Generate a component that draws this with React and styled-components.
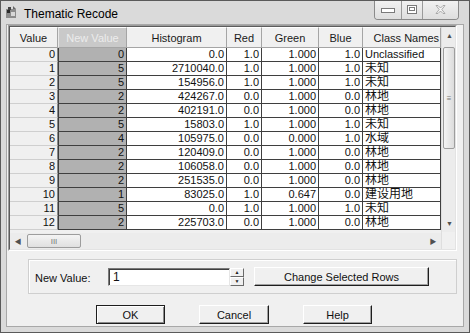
import styled, { createGlobalStyle } from "styled-components";

const GlobalStyle = createGlobalStyle`
  body {
    margin: 0;
    font-family: "Liberation Sans", Arial, "Noto Sans CJK SC", sans-serif;
    font-size: 11px;
    color: #111;
  }
`;

const COLS = "48px 69px 100px 35px 57px 44px 78px";

const Window = styled.div`
  width: 470px;
  height: 333px;
  box-sizing: border-box;
  border: 1px solid #5a5a5a;
  background: #dadada;
  display: flex;
  flex-direction: column;
  overflow: hidden;
`;

const TitleBar = styled.div`
  height: 23px;
  display: flex;
  align-items: flex-start;
  padding-left: 4px;
  position: relative;
`;

const TitleText = styled.span`
  font-size: 12px;
  margin-top: 6px;
  margin-left: 6px;
  color: #000;
`;

const Controls = styled.div`
  position: absolute;
  top: -1px;
  right: 10px;
  display: flex;
  border: 1px solid #8a8a8a;
  border-top: none;
  border-radius: 0 0 4px 4px;
  overflow: hidden;
  height: 19px;
`;

const CtrlButton = styled.div`
  width: ${(p) => p.$w}px;
  height: 19px;
  display: flex;
  align-items: center;
  justify-content: center;
  background: linear-gradient(#f2f2f2, #dedede);
  border-left: ${(p) => (p.$first ? "none" : "1px solid #9a9a9a")};
`;

const Client = styled.div`
  flex: 1;
  margin: 0 5px 5px 5px;
  border: 1px solid #a8a8a8;
  background: #f0f0f0;
  display: flex;
  flex-direction: column;
`;

const GridFrame = styled.div`
  margin-left: 1px;
  width: 449px;
  height: 226px;
  box-sizing: border-box;
  border: 1px solid #9c9c9c;
  border-right-color: #ffffff;
  border-bottom-color: #ffffff;
  display: flex;
`;

const GridInner = styled.div`
  flex: 1;
  border: 1px solid #5c5c5c;
  border-right-color: #e3e3e3;
  border-bottom-color: #e3e3e3;
  display: flex;
  overflow: hidden;
`;

const DataPane = styled.div`
  width: 431px;
  display: flex;
  flex-direction: column;
`;

const Rows = styled.div`
  flex: 1;
  overflow: hidden;
`;

const GridRow = styled.div`
  display: grid;
  grid-template-columns: ${COLS};
  height: ${(p) => p.$h}px;
`;

const HeadCell = styled.div`
  box-sizing: border-box;
  background: ${(p) => (p.$sel ? "#c9c9c9" : "#f0f0f0")};
  color: ${(p) => (p.$sel ? "#ececec" : "#1a1a1a")};
  border-top: 1px solid #ffffff;
  border-right: 1px solid #a5a5a5;
  border-bottom: 1px solid #a5a5a5;
  border-left: ${(p) => (p.$sel ? "1px solid #e8e8e8" : "none")};
  display: flex;
  align-items: center;
  justify-content: ${(p) => (p.$end ? "flex-end" : "center")};
  padding-right: ${(p) => (p.$end ? "1px" : "0")};
  white-space: nowrap;
`;

const Cell = styled.div`
  box-sizing: border-box;
  line-height: 13px;
  padding: 0 2px;
  white-space: nowrap;
  overflow: hidden;
  text-align: ${(p) => (p.$kind === "text" ? "left" : "right")};
  background: ${(p) =>
    p.$kind === "index" ? "#f0f0f0" : p.$kind === "new" ? "#b1b1b1" : "#ffffff"};
  border-bottom: 1px solid
    ${(p) => (p.$kind === "index" ? "#cfcfcf" : "#3f3f3f")};
  border-right: 1px solid ${(p) => (p.$kind === "index" ? "#8a8a8a" : "#3f3f3f")};
  border-left: ${(p) => (p.$kind === "new" ? "1px solid #3f3f3f" : "none")};
  font-size: ${(p) => (p.$cjk ? "12px" : "11px")};
`;

const HScroll = styled.div`
  height: 16px;
  margin-top: 2px;
  background: #ececec;
  display: flex;
  align-items: center;
`;

const VScroll = styled.div`
  width: 15px;
  display: flex;
  flex-direction: column;
  background: #ececec;
  border-left: 1px solid #dedede;
`;

const Arrow = styled.div`
  width: ${(p) => (p.$horiz ? 16 : 15)}px;
  height: ${(p) => (p.$horiz ? 16 : 17)}px;
  flex: none;
  display: flex;
  align-items: center;
  justify-content: center;
  color: #505050;
  font-size: 7px;
`;

const Thumb = styled.div`
  box-sizing: border-box;
  border: 1px solid #9d9d9d;
  border-radius: 2px;
  background: ${(p) =>
    p.$horiz
      ? "linear-gradient(#f4f4f4, #e0e0e0)"
      : "linear-gradient(90deg, #f4f4f4, #dcdcdc)"};
  display: flex;
  align-items: center;
  justify-content: center;
  color: #777;
  font-size: 8px;
  width: ${(p) => (p.$horiz ? "54px" : "12px")};
  height: ${(p) => (p.$horiz ? "14px" : "102px")};
  margin: ${(p) => (p.$horiz ? "0 0 0 1px" : "3px 0 0 1px")};
`;

const Spacer = styled.div`
  flex: 1;
`;

const Corner = styled.div`
  height: 17px;
  background: #f0f0f0;
`;

const GroupBox = styled.div`
  margin: 8px 0 0 21px;
  width: 429px;
  height: 35px;
  box-sizing: border-box;
  border: 1px solid #cfcfcf;
  box-shadow: inset 1px 1px 0 #ffffff;
  display: flex;
  align-items: center;
  padding: 0 0 0 6px;
`;

const Label = styled.span`
  width: 73px;
  margin-top: 2px;
`;

const Input = styled.div`
  width: 122px;
  height: 18px;
  box-sizing: border-box;
  background: #fff;
  border-top: 1px solid #7a7a7a;
  border-left: 1px solid #7a7a7a;
  border-bottom: 1px solid #e6e6e6;
  border-right: 1px solid #e6e6e6;
  box-shadow: inset 1px 1px 0 #404040;
  padding: 1px 0 0 4px;
  font-size: 12px;
  line-height: 14px;
`;

const Spin = styled.div`
  width: 14px;
  height: 18px;
  display: flex;
  flex-direction: column;
`;

const SpinBtn = styled.div`
  flex: 1;
  box-sizing: border-box;
  background: #f0f0f0;
  border: 1px solid #ffffff;
  border-right-color: #6a6a6a;
  border-bottom-color: #6a6a6a;
  display: flex;
  align-items: center;
  justify-content: center;
  font-size: 5px;
  color: #222;
`;

const Button = styled.div`
  box-sizing: border-box;
  width: ${(p) => p.$w}px;
  height: ${(p) => p.$h}px;
  margin-left: ${(p) => p.$ml || 0}px;
  background: #f0f0f0;
  border: 1px solid ${(p) => (p.$default ? "#1e1e1e" : "#ffffff")};
  border-right-color: #1e1e1e;
  border-bottom-color: #1e1e1e;
  box-shadow: ${(p) =>
    p.$default
      ? "inset 1px 1px 0 #ffffff, inset -1px -1px 0 #8a8a8a"
      : "inset -1px -1px 0 #a0a0a0"};
  display: flex;
  align-items: center;
  justify-content: center;
  font-size: 11px;
  color: #111;
`;

const ButtonRow = styled.div`
  display: flex;
  justify-content: center;
  gap: 34px;
  margin-top: 11px;
  padding-right: 2px;
`;

const rows = [
  [0, 0, "0.0", "1.0", "1.000", "1.0", "Unclassified"],
  [1, 5, "2710040.0", "1.0", "1.000", "1.0", "未知"],
  [2, 5, "154956.0", "1.0", "1.000", "1.0", "未知"],
  [3, 2, "424267.0", "0.0", "1.000", "0.0", "林地"],
  [4, 2, "402191.0", "0.0", "1.000", "0.0", "林地"],
  [5, 5, "15803.0", "1.0", "1.000", "1.0", "未知"],
  [6, 4, "105975.0", "0.0", "0.000", "1.0", "水域"],
  [7, 2, "120409.0", "0.0", "1.000", "0.0", "林地"],
  [8, 2, "106058.0", "0.0", "1.000", "0.0", "林地"],
  [9, 2, "251535.0", "0.0", "1.000", "0.0", "林地"],
  [10, 1, "83025.0", "1.0", "0.647", "0.0", "建设用地"],
  [11, 5, "0.0", "1.0", "1.000", "1.0", "未知"],
  [12, 2, "225703.0", "0.0", "1.000", "0.0", "林地"],
];

function AppIcon() {
  return (
    <svg width="13" height="13" viewBox="0 0 13 13" style={{ marginTop: 5 }}>
      <rect x="1" y="3" width="10" height="9" fill="#8c8c8c" />
      <rect x="2" y="4" width="3" height="3" fill="#2a2a2a" />
      <rect x="6" y="6" width="4" height="4" fill="#d8d8d8" />
      <path d="M3 1 L6 1 L6 4 L3 4 Z" fill="#444" />
      <path d="M8 0 L11 3 L8 3 Z" fill="#666" />
    </svg>
  );
}

export default function App() {
  return (
    <Window>
      <GlobalStyle />
      <TitleBar>
        <AppIcon />
        <TitleText>Thematic Recode</TitleText>
        <Controls>
          <CtrlButton $w={26} $first>
            <svg width="14" height="6" viewBox="0 0 14 6">
              <rect x="0.5" y="1.5" width="13" height="4" fill="#fff" stroke="#7a7a7a" />
            </svg>
          </CtrlButton>
          <CtrlButton $w={20}>
            <svg width="10" height="9" viewBox="0 0 10 9">
              <rect x="0.5" y="0.5" width="9" height="8" fill="#fff" stroke="#7a7a7a" />
              <rect x="2.5" y="2.5" width="5" height="3" fill="none" stroke="#7a7a7a" />
            </svg>
          </CtrlButton>
          <CtrlButton $w={35}>
            <svg width="11" height="9" viewBox="0 0 11 9">
              <path
                d="M1 0.5 L3 0.5 L5.5 3 L8 0.5 L10 0.5 L6.8 4.5 L10 8.5 L8 8.5 L5.5 6 L3 8.5 L1 8.5 L4.2 4.5 Z"
                fill="#f4f4f4"
                stroke="#9a9a9a"
                strokeWidth="0.8"
              />
            </svg>
          </CtrlButton>
        </Controls>
      </TitleBar>
      <Client>
        <GridFrame>
          <GridInner>
            <DataPane>
              <GridRow $h={21}>
                <HeadCell>Value</HeadCell>
                <HeadCell $sel>New Value</HeadCell>
                <HeadCell>Histogram</HeadCell>
                <HeadCell>Red</HeadCell>
                <HeadCell>Green</HeadCell>
                <HeadCell>Blue</HeadCell>
                <HeadCell $end>Class Names</HeadCell>
              </GridRow>
              <Rows>
                {rows.map((r) => (
                  <GridRow key={r[0]} $h={14}>
                    <Cell $kind="index">{r[0]}</Cell>
                    <Cell $kind="new">{r[1]}</Cell>
                    <Cell>{r[2]}</Cell>
                    <Cell>{r[3]}</Cell>
                    <Cell>{r[4]}</Cell>
                    <Cell>{r[5]}</Cell>
                    <Cell $kind="text" $cjk={r[0] !== 0}>
                      {r[6]}
                    </Cell>
                  </GridRow>
                ))}
              </Rows>
              <HScroll>
                <Arrow $horiz>◀</Arrow>
                <Thumb $horiz>III</Thumb>
                <Spacer />
                <Arrow $horiz>▶</Arrow>
              </HScroll>
            </DataPane>
            <VScroll>
              <Arrow>▲</Arrow>
              <Thumb>≡</Thumb>
              <Spacer />
              <Arrow>▼</Arrow>
              <Corner />
            </VScroll>
          </GridInner>
        </GridFrame>
        <GroupBox>
          <Label>New Value:</Label>
          <Input>1</Input>
          <Spin>
            <SpinBtn>▲</SpinBtn>
            <SpinBtn>▼</SpinBtn>
          </Spin>
          <Button $w={175} $h={19} $ml={10}>
            Change Selected Rows
          </Button>
        </GroupBox>
        <ButtonRow>
          <Button $w={69} $h={19} $default>
            OK
          </Button>
          <Button $w={70} $h={19}>
            Cancel
          </Button>
          <Button $w={69} $h={19}>
            Help
          </Button>
        </ButtonRow>
      </Client>
    </Window>
  );
}
